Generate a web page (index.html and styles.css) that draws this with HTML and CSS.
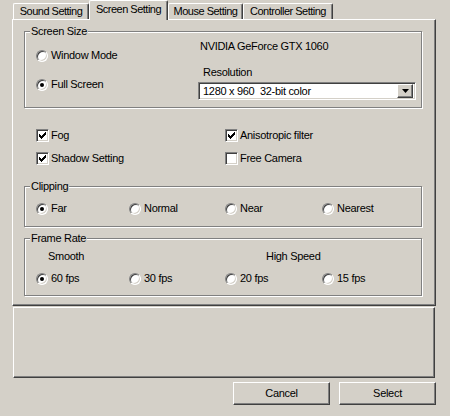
FILE: index.html
```
<!DOCTYPE html>
<html>
<head>
<meta charset="utf-8">
<link rel="stylesheet" href="styles.css">
</head>
<body>
<div class="win">
  <div class="tabs">
    <div class="tab t-sound">Sound Setting</div>
    <div class="tab sel t-screen">Screen Setting</div>
    <div class="tab t-mouse">Mouse Setting</div>
    <div class="tab t-ctrl">Controller Setting</div>
  </div>
  <div class="panel">
    <fieldset class="grp g-screen">
      <legend>Screen Size</legend>
      <div class="ss">
        <div class="ss-left">
          <div class="opt"><span class="radio"></span>Window Mode</div>
          <div class="opt"><span class="radio on"></span>Full Screen</div>
        </div>
        <div class="ss-right">
          <div class="gpu">NVIDIA GeForce GTX 1060</div>
          <div class="res-label">Resolution</div>
          <div class="select">
            <span class="sel-text">1280 x 960&nbsp; 32-bit color</span>
            <span class="sel-btn"><svg width="7" height="4" viewBox="0 0 7 4"><path d="M0 0h7l-3.5 4z" fill="#000"/></svg></span>
          </div>
        </div>
      </div>
    </fieldset>
    <div class="checks">
      <div class="opt"><span class="check"><svg width="7" height="7" viewBox="0 0 7 7" shape-rendering="crispEdges"><path d="M0 2h1v1h1v1h1v-1h1v-1h1v-1h1v-1h1v3h-1v1h-1v1h-1v1h-1v1h-1v-1h-1v-1h-1z" fill="#000"/></svg></span>Fog</div>
      <div class="opt"><span class="check"><svg width="7" height="7" viewBox="0 0 7 7" shape-rendering="crispEdges"><path d="M0 2h1v1h1v1h1v-1h1v-1h1v-1h1v-1h1v3h-1v1h-1v1h-1v1h-1v1h-1v-1h-1v-1h-1z" fill="#000"/></svg></span>Anisotropic filter</div>
      <div class="opt"><span class="check"><svg width="7" height="7" viewBox="0 0 7 7" shape-rendering="crispEdges"><path d="M0 2h1v1h1v1h1v-1h1v-1h1v-1h1v-1h1v3h-1v1h-1v1h-1v1h-1v1h-1v-1h-1v-1h-1z" fill="#000"/></svg></span>Shadow Setting</div>
      <div class="opt"><span class="check"></span>Free Camera</div>
    </div>
    <fieldset class="grp g-clip">
      <legend>Clipping</legend>
      <div class="row4">
        <div class="opt"><span class="radio on"></span>Far</div>
        <div class="opt"><span class="radio"></span>Normal</div>
        <div class="opt"><span class="radio"></span>Near</div>
        <div class="opt"><span class="radio"></span>Nearest</div>
      </div>
    </fieldset>
    <fieldset class="grp g-fps">
      <legend>Frame Rate</legend>
      <div class="fps-heads"><span class="smooth">Smooth</span><span class="fast">High Speed</span></div>
      <div class="row4 fps-row">
        <div class="opt"><span class="radio on"></span>60 fps</div>
        <div class="opt"><span class="radio"></span>30 fps</div>
        <div class="opt"><span class="radio"></span>20 fps</div>
        <div class="opt"><span class="radio"></span>15 fps</div>
      </div>
    </fieldset>
  </div>
  <div class="msg"></div>
  <div class="buttons">
    <div class="btn">Cancel</div>
    <div class="btn">Select</div>
  </div>
</div>
</body>
</html>
```
FILE: styles.css
```
body {
  margin: 0;
  background: #d4d0c8;
  font-family: "Liberation Sans", Arial, sans-serif;
  font-size: 11px;
  line-height: 13px;
  letter-spacing: -0.3px;
  color: #000;
}
.win {
  width: 450px;
  height: 416px;
  box-sizing: border-box;
  padding: 0 14px 0 12px;
}
.tabs {
  display: flex;
  align-items: flex-end;
  height: 19px;
  padding-left: 1px;
}
.tab {
  box-sizing: border-box;
  height: 16px;
  line-height: 14px;
  padding: 0;
  text-align: center;
  letter-spacing: -0.5px;
  border-top: 1px solid #fff;
  border-left: 1px solid #fff;
  border-right: 1px solid #404040;
  border-radius: 2px 2px 0 0;
  box-shadow: inset -1px 0 #808080;
  white-space: nowrap;
  overflow: hidden;
}
.t-sound { width: 76px; }
.t-screen { width: 79px; }
.t-mouse { width: 75px; }
.t-ctrl { width: 90px; }
.tab.sel {
  position: relative;
  z-index: 1;
  height: 20px;
  line-height: 17px;
  margin-bottom: -1px;
  background: #d4d0c8;
}
.panel {
  box-sizing: border-box;
  border-top: 1px solid #fff;
  border-left: 1px solid #fff;
  border-right: 1px solid #404040;
  border-bottom: 1px solid #404040;
  box-shadow: inset -1px -1px #808080;
  padding: 5px 13px 9px 11px;
}
.grp {
  margin: 0;
  padding: 0;
  min-width: 0;
  border: 1px solid #808080;
  box-shadow: inset 1px 1px #fff, 1px 1px #fff;
}
.grp legend {
  margin-left: 5px;
  padding: 0 1px;
  line-height: 13px;
  background: #d4d0c8;
}
.opt {
  display: flex;
  align-items: center;
  height: 13px;
  white-space: nowrap;
}
.radio {
  box-sizing: border-box;
  flex: none;
  width: 12px;
  height: 12px;
  margin-right: 3px;
  border-radius: 50%;
  border: 1px solid;
  border-color: #808080 #fff #fff #808080;
  box-shadow: inset 1px 1px #404040, inset -1px -1px #d4d0c8;
  background: #fff;
  display: flex;
  align-items: center;
  justify-content: center;
}
.radio.on::after {
  content: "";
  width: 4px;
  height: 4px;
  border-radius: 50%;
  background: #000;
}
.check {
  box-sizing: border-box;
  flex: none;
  width: 13px;
  height: 13px;
  margin-right: 2px;
  border: 1px solid;
  border-color: #808080 #fff #fff #808080;
  box-shadow: inset 1px 1px #404040, inset -1px -1px #d4d0c8;
  background: #fff;
  display: flex;
  align-items: center;
  justify-content: center;
}
.check svg {
  display: block;
}
.ss {
  display: flex;
}
.ss-left {
  width: 173px;
  box-sizing: border-box;
  padding: 11px 0 0 11px;
  display: flex;
  flex-direction: column;
  gap: 16px;
}
.ss-right {
  padding: 2px 0 7px 0;
}
.gpu {
  padding-left: 2px;
}
.res-label {
  margin-top: 13px;
  padding-left: 5px;
}
.select {
  margin-top: 3px;
  box-sizing: border-box;
  width: 218px;
  height: 18px;
  padding: 2px 2px 2px 4px;
  border: 1px solid;
  border-color: #808080 #fff #fff #808080;
  box-shadow: inset 1px 1px #404040, inset -1px -1px #d4d0c8;
  background: #fff;
  display: flex;
  align-items: center;
}
.sel-text {
  flex: 1;
}
.sel-btn {
  box-sizing: border-box;
  width: 16px;
  height: 14px;
  background: #d4d0c8;
  border: 1px solid;
  border-color: #fff #404040 #404040 #fff;
  box-shadow: inset -1px -1px #808080;
  display: flex;
  align-items: center;
  justify-content: center;
}
.sel-btn svg {
  display: block;
}
.checks {
  margin-top: 21px;
  padding-left: 12px;
  display: grid;
  grid-template-columns: 189px 1fr;
  row-gap: 10px;
}
.g-clip {
  margin-top: 15px;
}
.row4 {
  display: grid;
  grid-template-columns: 93px 96px 97px 1fr;
  padding: 9px 0 11px 11px;
}
.g-fps {
  margin-top: 5px;
}
.fps-heads {
  display: flex;
  padding: 5px 0 0 23px;
  height: 13px;
}
.smooth {
  width: 218px;
}
.fps-row {
  padding: 9px 0 10px 11px;
}
.msg {
  margin: 1px 1px 0 1px;
  height: 71px;
  box-sizing: border-box;
  border: 1px solid;
  border-color: #fff #404040 #404040 #fff;
  box-shadow: inset -1px -1px #808080;
}
.buttons {
  display: flex;
  justify-content: flex-end;
  gap: 9px;
  margin-top: 4px;
}
.btn {
  box-sizing: border-box;
  width: 97px;
  height: 23px;
  border: 1px solid;
  border-color: #fff #404040 #404040 #fff;
  box-shadow: inset -1px -1px #808080;
  display: flex;
  align-items: center;
  justify-content: center;
}
```
